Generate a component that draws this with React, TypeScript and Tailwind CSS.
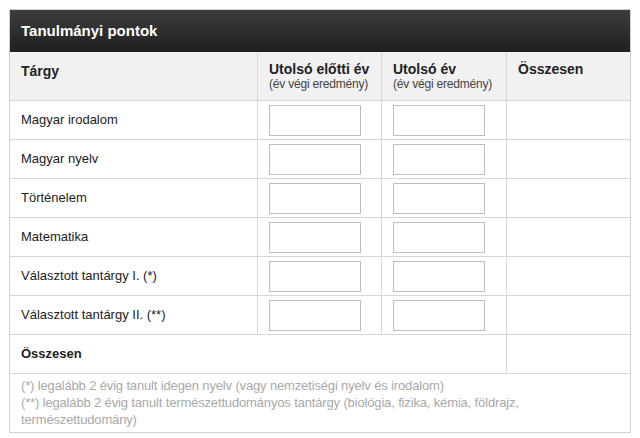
const subjects = [
  'Magyar irodalom',
  'Magyar nyelv',
  'Történelem',
  'Matematika',
  'Választott tantárgy I. (*)',
  'Választott tantárgy II. (**)',
];

const ScoreInput = () => (
  <input
    type="text"
    className="h-[31px] w-[92px] border border-[#bdbdbd] bg-white outline-none"
  />
);

export default function App() {
  return (
    <div className="min-h-screen bg-white pl-[9px] pt-[9px] font-['Liberation_Sans',Arial,sans-serif] text-[#222]">
      <div className="w-[622px] border border-[#d0d0d0]">
        {/* Title bar */}
        <div className="flex h-[42px] items-center bg-gradient-to-b from-[#3d3d3d] to-[#202020] px-[11px] text-[15px] font-bold text-white">
          Tanulmányi pontok
        </div>

        {/* Column headers */}
        <div className="flex h-[49px] border-b border-[#d6d6d6] bg-[#f1f1f1] text-[14px] font-bold">
          <div className="w-[248px] border-r border-[#d6d6d6] px-[11px] pt-[9px]">Tárgy</div>
          <div className="w-[124px] border-r border-[#d6d6d6] px-[11px] pt-[9px] leading-[16px]">
            Utolsó előtti év
            <div className="text-[12px] font-normal leading-[14px] tracking-[-0.2px] text-[#444]">(év végi eredmény)</div>
          </div>
          <div className="w-[125px] border-r border-[#d6d6d6] px-[11px] pt-[9px] leading-[16px]">
            Utolsó év
            <div className="text-[12px] font-normal leading-[14px] tracking-[-0.2px] text-[#444]">(év végi eredmény)</div>
          </div>
          <div className="flex-1 px-[11px] pt-[9px] leading-[16px]">Összesen</div>
        </div>

        {/* Subject rows */}
        {subjects.map((name) => (
          <div key={name} className="flex h-[39px] border-b border-[#d6d6d6] text-[13px]">
            <div className="flex w-[248px] items-center border-r border-[#d6d6d6] px-[11px]">{name}</div>
            <div className="flex w-[124px] items-center border-r border-[#d6d6d6] px-[11px]">
              <ScoreInput />
            </div>
            <div className="flex w-[125px] items-center border-r border-[#d6d6d6] px-[11px]">
              <ScoreInput />
            </div>
            <div className="flex-1" />
          </div>
        ))}

        {/* Total row */}
        <div className="flex h-[39px] border-b border-[#d6d6d6] text-[13px] font-bold">
          <div className="flex w-[497px] items-center border-r border-[#d6d6d6] px-[11px]">Összesen</div>
          <div className="flex-1" />
        </div>

        {/* Footnotes */}
        <div className="px-[11px] pb-[4px] pt-[3px] text-[13px] leading-[17px] tracking-[-0.15px] text-[#a9a9a9]">
          <div>(*) legalább 2 évig tanult idegen nyelv (vagy nemzetiségi nyelv és irodalom)</div>
          <div>(**) legalább 2 évig tanult természettudományos tantárgy (biológia, fizika, kémia, földrajz, természettudomány)</div>
        </div>
      </div>
    </div>
  );
}
